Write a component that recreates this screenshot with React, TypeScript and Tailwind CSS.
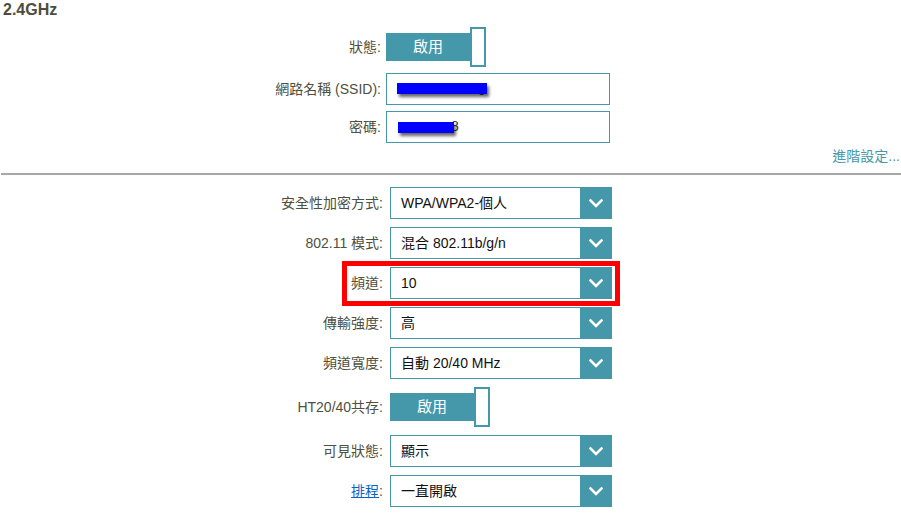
import React from "react";

const FONT = { fontFamily: '"Liberation Sans", Arial, "Noto Sans CJK TC", sans-serif' };

function Chevron() {
  return (
    <svg width="14" height="9" viewBox="0 0 14 9" className="block">
      <path d="M1.5 1.5 L7 7 L12.5 1.5" fill="none" stroke="#ffffff" strokeWidth="2.6" strokeLinecap="square" />
    </svg>
  );
}

function Select({ value }: { value: string }) {
  return (
    <div className="ml-[7px] w-[222px] h-[32px] border border-[#4598aa] flex bg-white">
      <div className="flex-1 flex items-center pl-[10px] text-[14px] text-[#111]">{value}</div>
      <div className="w-[31px] h-full bg-[#4598aa] flex items-center justify-center pl-[1px]">
        <Chevron />
      </div>
    </div>
  );
}

function Toggle({ ml }: { ml: string }) {
  return (
    <div className={`flex items-center ${ml}`}>
      <div className="w-[84px] h-[28px] bg-[#4598aa] text-white text-[15px] flex items-center justify-center">啟用</div>
      <div className="w-[16px] h-[40px] border-2 border-[#4598aa] bg-white"></div>
    </div>
  );
}

function LowerRow({ label, children, h = "h-[32px]" }: { label: React.ReactNode; children: React.ReactNode; h?: string }) {
  return (
    <div className={`flex items-center ${h} relative`}>
      <div className="w-[383px] text-right text-[14px] text-[#4f4f40]">{label}</div>
      {children}
    </div>
  );
}

export default function App() {
  return (
    <div className="w-[901px] h-[513px] bg-white overflow-hidden relative" style={FONT}>
      <div className="pl-[3px] pt-[1px] h-[27px] text-[16px] font-bold leading-[18px] text-[#4d4d3d]">2.4GHz</div>

      <div className="flex items-center h-[40px]">
        <div className="w-[381px] text-right text-[14px] text-[#4f4f40]">狀態:</div>
        <div className="ml-[5px]">
          <Toggle ml="" />
        </div>
      </div>

      <div className="flex items-center h-[32px] mt-[6px]">
        <div className="w-[381px] text-right text-[14px] text-[#4f4f40]">網路名稱 (SSID):</div>
        <div className="ml-[5px] w-[224px] h-[32px] border border-[#4598aa] relative text-[14px] text-[#333]">
          <span className="absolute left-[91px] top-[5px] leading-[16px]">g</span>
          <div className="absolute left-[10px] top-[9px] w-[90px] h-[11px] bg-[#0000ff] shadow-[2px_3px_3px_rgba(0,0,0,0.6)]"></div>
        </div>
      </div>

      <div className="flex items-center h-[32px] mt-[6px]">
        <div className="w-[381px] text-right text-[14px] text-[#4f4f40]">密碼:</div>
        <div className="ml-[5px] w-[224px] h-[32px] border border-[#4598aa] relative text-[14px] text-[#333]">
          <span className="absolute left-[64px] top-[6px] leading-[16px]">8</span>
          <div className="absolute left-[11px] top-[10px] w-[56px] h-[11px] bg-[#0000ff] shadow-[2px_3px_3px_rgba(0,0,0,0.6)]"></div>
        </div>
      </div>

      <div className="mt-[5px] h-[16px] flex justify-end pr-[1px] text-[14px] leading-[16px] text-[#4598aa]">進階設定...</div>

      <div className="mt-[9px] ml-[1px] h-[2px] bg-[#a8a8a8]"></div>

      <div className="mt-[12px] flex flex-col gap-[8px]">
        <LowerRow label="安全性加密方式:">
          <Select value="WPA/WPA2-個人" />
        </LowerRow>
        <LowerRow label="802.11 模式:">
          <Select value="混合 802.11b/g/n" />
        </LowerRow>
        <LowerRow label="頻道:">
          <Select value="10" />
          <div className="absolute left-[342px] top-[-6px] w-[278px] h-[45px] border-[5px] border-[#ff0000]"></div>
        </LowerRow>
        <LowerRow label="傳輸強度:">
          <Select value="高" />
        </LowerRow>
        <LowerRow label="頻道寬度:">
          <Select value="自動 20/40 MHz" />
        </LowerRow>
        <LowerRow label="HT20/40共存:" h="h-[40px]">
          <Toggle ml="ml-[7px]" />
        </LowerRow>
        <LowerRow label="可見狀態:">
          <Select value="顯示" />
        </LowerRow>
        <LowerRow
          label={
            <span>
              <span className="text-[#0b63c4] underline">排程</span>:
            </span>
          }
        >
          <Select value="一直開啟" />
        </LowerRow>
      </div>
    </div>
  );
}
